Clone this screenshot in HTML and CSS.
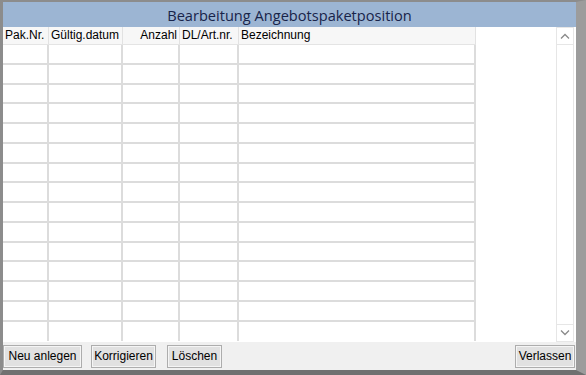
FILE: index.html
```html
<!DOCTYPE html>
<html>
<head>
<meta charset="utf-8">
<link rel="stylesheet" href="styles.css">
</head>
<body>
<div class="window">
  <div class="titlebar">Bearbeitung Angebotspaketposition</div>
  <div class="content">
    <div class="grid">
      <div class="row head">
        <div class="c c1">Pak.Nr.</div>
        <div class="c c2">Gültig.datum</div>
        <div class="c c3 right">Anzahl</div>
        <div class="c c4">DL/Art.nr.</div>
        <div class="c c5">Bezeichnung</div>
      </div>
      <div class="row"><div class="c c1"></div><div class="c c2"></div><div class="c c3"></div><div class="c c4"></div><div class="c c5"></div></div>
      <div class="row"><div class="c c1"></div><div class="c c2"></div><div class="c c3"></div><div class="c c4"></div><div class="c c5"></div></div>
      <div class="row"><div class="c c1"></div><div class="c c2"></div><div class="c c3"></div><div class="c c4"></div><div class="c c5"></div></div>
      <div class="row"><div class="c c1"></div><div class="c c2"></div><div class="c c3"></div><div class="c c4"></div><div class="c c5"></div></div>
      <div class="row"><div class="c c1"></div><div class="c c2"></div><div class="c c3"></div><div class="c c4"></div><div class="c c5"></div></div>
      <div class="row"><div class="c c1"></div><div class="c c2"></div><div class="c c3"></div><div class="c c4"></div><div class="c c5"></div></div>
      <div class="row"><div class="c c1"></div><div class="c c2"></div><div class="c c3"></div><div class="c c4"></div><div class="c c5"></div></div>
      <div class="row"><div class="c c1"></div><div class="c c2"></div><div class="c c3"></div><div class="c c4"></div><div class="c c5"></div></div>
      <div class="row"><div class="c c1"></div><div class="c c2"></div><div class="c c3"></div><div class="c c4"></div><div class="c c5"></div></div>
      <div class="row"><div class="c c1"></div><div class="c c2"></div><div class="c c3"></div><div class="c c4"></div><div class="c c5"></div></div>
      <div class="row"><div class="c c1"></div><div class="c c2"></div><div class="c c3"></div><div class="c c4"></div><div class="c c5"></div></div>
      <div class="row"><div class="c c1"></div><div class="c c2"></div><div class="c c3"></div><div class="c c4"></div><div class="c c5"></div></div>
      <div class="row"><div class="c c1"></div><div class="c c2"></div><div class="c c3"></div><div class="c c4"></div><div class="c c5"></div></div>
      <div class="row"><div class="c c1"></div><div class="c c2"></div><div class="c c3"></div><div class="c c4"></div><div class="c c5"></div></div>
      <div class="row last"><div class="c c1"></div><div class="c c2"></div><div class="c c3"></div><div class="c c4"></div><div class="c c5"></div></div>
    </div>
    <div class="filler"></div>
    <div class="scrollbar">
      <div class="sbtn">
        <svg width="10" height="6" viewBox="0 0 10 6"><path d="M1 5.5 L5 1.5 L9 5.5" fill="none" stroke="#8a8a8a" stroke-width="1.3"/></svg>
      </div>
      <div class="strack"></div>
      <div class="sbtn">
        <svg width="10" height="6" viewBox="0 0 10 6"><path d="M1 0.5 L5 4.5 L9 0.5" fill="none" stroke="#8a8a8a" stroke-width="1.3"/></svg>
      </div>
    </div>
    <div class="edge"></div>
  </div>
  <div class="buttonbar">
    <button class="btn b1">Neu anlegen</button>
    <button class="btn b2">Korrigieren</button>
    <button class="btn b3">Löschen</button>
    <div class="spacer"></div>
    <button class="btn b4">Verlassen</button>
  </div>
</div>
</body>
</html>
```

FILE: styles.css
```css
html, body {
  margin: 0;
  padding: 0;
  background: #7d7d7d;
}
.window {
  width: 586px;
  height: 375px;
  box-sizing: border-box;
  background: #f0f0f0;
  border-top: 2px solid #8c8c8c;
  border-left: 3px solid #8c8c8c;
  border-right: 10px solid #9c9c9c;
  border-bottom: 5px solid #707070;
  display: flex;
  flex-direction: column;
  font-family: "Liberation Sans", Arial, sans-serif;
  font-size: 12px;
  color: #000;
}
.titlebar {
  height: 25px;
  background: #9cb5d3;
  color: #18244a;
  font-family: "Open Sans", "Noto Sans", sans-serif;
  font-size: 14.6px;
  line-height: 26px;
  text-align: center;
}
.content {
  height: 315px;
  display: flex;
  background: #fff;
}
.grid {
  width: 473px;
  display: flex;
  flex-direction: column;
}
.row {
  display: flex;
  height: 19.75px;
  box-sizing: border-box;
  border-bottom: 2px solid #dcdcdc;
}
.row.last {
  border-bottom: none;
}
.row.head {
  height: 18px;
  background: #f7f7f7;
  border-bottom: 1px solid #e4e4e4;
  line-height: 17px;
}
.c {
  box-sizing: border-box;
  border-right: 2px solid #dcdcdc;
  padding-left: 2px;
  white-space: nowrap;
  overflow: hidden;
}
.head .c {
  border-right: 1px solid #e2e2e2;
}
.c.right {
  text-align: right;
  padding-right: 2px;
}
.c1 { width: 46px; }
.c2 { width: 74px; }
.c3 { width: 57px; }
.c4 { width: 59px; }
.c5 { width: 237px; }
.filler {
  width: 80px;
}
.scrollbar {
  width: 18px;
  box-sizing: border-box;
  border-left: 1px solid #e6e6e6;
  border-right: 1px solid #e6e6e6;
  display: flex;
  flex-direction: column;
}
.sbtn {
  height: 18px;
  display: flex;
  align-items: center;
  justify-content: center;
  border-bottom: 1px solid #e6e6e6;
  border-top: 1px solid #e6e6e6;
  box-sizing: border-box;
}
.strack {
  flex: 1;
}
.edge {
  width: 2px;
}
.buttonbar {
  flex: 1;
  display: flex;
  align-items: center;
  padding: 0 1px 0 0;
  background: #f0f0f0;
}
.btn {
  font-family: "Liberation Sans", Arial, sans-serif;
  font-size: 12px;
  height: 23px;
  padding: 0 2px;
  background: #e1e1e1;
  border: 1px solid #adadad;
  box-shadow: inset 0 0 0 1px #f5f5f5;
  color: #000;
  margin: 0;
}
.b1 { width: 79px; }
.b2 { width: 65px; margin-left: 9px; }
.b3 { width: 55px; margin-left: 11px; }
.b4 { width: 60px; }
.spacer { flex: 1; }
```
